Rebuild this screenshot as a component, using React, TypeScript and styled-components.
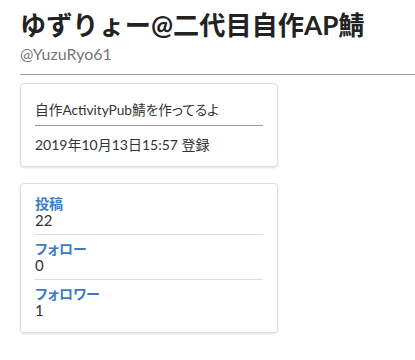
import React from "react";
import styled, { createGlobalStyle } from "styled-components";

const GlobalStyle = createGlobalStyle`
  body {
    margin: 0;
    background: #fff;
    font-family: Lato, "Noto Sans CJK JP", sans-serif;
    color: #333;
  }
`;

const stats = [
  { label: "投稿", value: 22 },
  { label: "フォロー", value: 0 },
  { label: "フォロワー", value: 1 },
];

export default function App() {
  return (
    <>
      <GlobalStyle />
      <Page>
        <Header>
          <Name>ゆずりょー@二代目自作AP鯖</Name>
          <Handle>@YuzuRyo61</Handle>
        </Header>
        <Rule />
        <Card>
          <Bio>自作ActivityPub鯖を作ってるよ</Bio>
          <InnerRule />
          <Joined>2019年10月13日15:57 登録</Joined>
        </Card>
        <StatsCard>
          {stats.map((s, i) => (
            <StatRow key={s.label} $first={i === 0}>
              <StatLabel>{s.label}</StatLabel>
              <StatValue>{s.value}</StatValue>
            </StatRow>
          ))}
        </StatsCard>
      </Page>
    </>
  );
}

const Page = styled.div`
  display: flex;
  flex-direction: column;
  padding: 6px 0 0 20px;
`;

const Header = styled.div`
  display: flex;
  flex-direction: column;
`;

const Name = styled.h1`
  margin: 0;
  font-size: 26.2px;
  font-weight: bold;
  color: #222;
  line-height: 38px;
`;

const Handle = styled.div`
  font-size: 16px;
  color: #777;
  line-height: 20px;
`;

const Rule = styled.hr`
  margin: 10px 0 8px;
  border: none;
  border-top: 1px solid #999;
  height: 0;
`;

const Card = styled.div`
  width: 228px;
  padding: 15px 14px 10px;
  border: 1px solid #ddd;
  border-radius: 4px;
  box-shadow: 0 1px 2px rgba(0, 0, 0, 0.12);
  margin-bottom: 16px;
  font-size: 14px;
  font-feature-settings: "palt";
`;

const StatsCard = styled(Card)`
  padding: 12px 14px 8px;
`;

const Bio = styled.div`
  font-size: 13.7px;
  line-height: 22px;
`;

const InnerRule = styled.hr`
  margin: 4px 0 8px;
  border: none;
  border-top: 1px solid #999;
`;

const Joined = styled.div`
  line-height: 22px;
`;

const StatRow = styled.div<{ $first: boolean }>`
  display: flex;
  flex-direction: column;
  padding: 2px 0 6px;
  border-top: ${({ $first }) => ($first ? "none" : "1px solid #ddd")};
  padding-top: ${({ $first }) => ($first ? "0" : "6px")};
`;

const StatLabel = styled.div`
  color: #3d7cc4;
  font-weight: bold;
  font-size: 14px;
  line-height: 16px;
`;

const StatValue = styled.div`
  font-size: 15px;
  line-height: 16px;
`;
